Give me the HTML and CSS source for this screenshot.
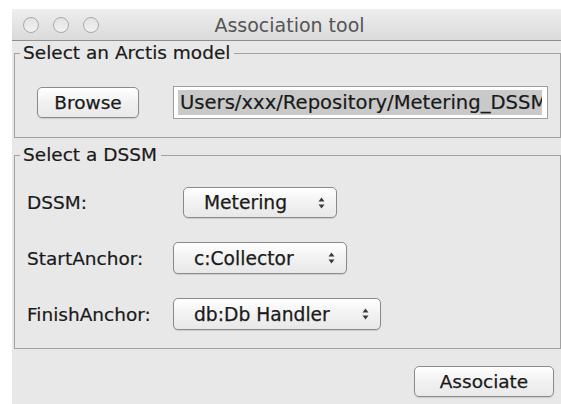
FILE: index.html
```html
<!DOCTYPE html>
<html lang="en">
<head>
<meta charset="utf-8">
<title>Association tool</title>
<link rel="stylesheet" href="styles.css">
</head>
<body>
<div class="window">
  <header class="titlebar">
    <div class="lights">
      <span class="light"></span>
      <span class="light"></span>
      <span class="light"></span>
    </div>
    <div class="title">Association tool</div>
    <div></div>
  </header>

  <main class="content">
    <fieldset class="group group-model">
      <legend>Select an Arctis model</legend>
      <div class="model-row">
        <button class="btn btn-browse" type="button">Browse</button>
        <div class="path-field"><div class="path-sel">Users/xxx/Repository/Metering_DSSM</div></div>
      </div>
    </fieldset>

    <fieldset class="group group-dssm">
      <legend>Select a DSSM</legend>
      <div class="form-grid">
        <span class="label">DSSM:</span>
        <div class="popup popup-dssm">
          <span>Metering</span>
          <svg class="arrows" width="7" height="12" viewBox="0 0 7 12"><path d="M3.5 0.5L6.5 4.6H0.5Z M3.5 11.5L6.5 7.4H0.5Z"/></svg>
        </div>

        <span class="label">StartAnchor:</span>
        <div class="popup popup-start">
          <span>c:Collector</span>
          <svg class="arrows" width="7" height="12" viewBox="0 0 7 12"><path d="M3.5 0.5L6.5 4.6H0.5Z M3.5 11.5L6.5 7.4H0.5Z"/></svg>
        </div>

        <span class="label">FinishAnchor:</span>
        <div class="popup popup-finish">
          <span>db:Db Handler</span>
          <svg class="arrows" width="7" height="12" viewBox="0 0 7 12"><path d="M3.5 0.5L6.5 4.6H0.5Z M3.5 11.5L6.5 7.4H0.5Z"/></svg>
        </div>
      </div>
    </fieldset>

    <div class="actions">
      <button class="btn btn-associate" type="button">Associate</button>
    </div>
  </main>
</div>
</body>
</html>
```

FILE: styles.css
```css
html, body {
  margin: 0;
  padding: 0;
  background: #ffffff;
}

body {
  padding: 9px 0 0 12px;
  font-family: "DejaVu Sans", "Liberation Sans", sans-serif;
  font-size: 18px;
  color: #1a1a1a;
  overflow: hidden;
}

.window {
  width: 549px;
  height: 395px;
  background: #e8e8e8;
  display: flex;
  flex-direction: column;
}

/* title bar with inactive traffic lights */
.titlebar {
  height: 31px;
  display: grid;
  grid-template-columns: 1fr auto 1fr;
  align-items: center;
  background: linear-gradient(#eeeeee, #dadada);
  border-bottom: 1px solid #8e8e8e;
  flex: none;
}

.lights {
  display: flex;
  gap: 14px;
  padding-left: 11px;
}

.light {
  width: 14px;
  height: 14px;
  border-radius: 50%;
  border: 1px solid #a9a9a9;
  background: linear-gradient(#e2e2e2, #f2f2f2);
}

.title {
  font-size: 19px;
  line-height: 22px;
  color: #555555;
  padding-left: 6px;
}

.content {
  flex: 1;
  display: flex;
  flex-direction: column;
}

/* titled borders */
.group {
  margin: 0 0 0 2px;
  padding: 0;
  border: 1px solid #a2a2a2;
  min-width: 0;
}

.group legend {
  margin-left: 5px;
  padding: 0 4px 0 3px;
  line-height: 20px;
  font-size: 18.5px;
  color: #1a1a1a;
  -webkit-text-stroke: 0.2px #1a1a1a;
}

.group-model {
  margin-top: 2px;
}

.model-row {
  display: flex;
  align-items: center;
  padding: 23px 0 18px 22px;
}

.btn {
  font-family: inherit;
  font-size: 18.5px;
  color: #1a1a1a;
  -webkit-text-stroke: 0.25px #1a1a1a;
  background: linear-gradient(#ffffff, #f1f1f1 50%, #e9e9e9);
  border: 1px solid #8b8b8b;
  border-radius: 5px;
  box-shadow: 0 1px 1px rgba(0, 0, 0, 0.12);
  padding: 0;
  line-height: 22px;
}

.btn-browse {
  width: 102px;
  height: 31px;
}

.path-field {
  margin-left: 34px;
  width: 375px;
  height: 33px;
  box-sizing: border-box;
  border: 1px solid #9d9d9d;
  background: #ffffff;
  padding: 3px 5px 3px 4px;
}

.path-sel {
  height: 25px;
  line-height: 25px;
  background: #c9c9c9;
  white-space: nowrap;
  overflow: hidden;
  padding-left: 2px;
  font-size: 19.6px;
  color: #1a1a1a;
  -webkit-text-stroke: 0.2px #1a1a1a;
}

.group-dssm {
  margin-top: 7px;
}

.form-grid {
  display: grid;
  grid-template-columns: 146px auto;
  row-gap: 24px;
  align-items: center;
  justify-items: start;
  padding: 22px 0 18px 12px;
}

.label {
  font-size: 18.5px;
  color: #1a1a1a;
  -webkit-text-stroke: 0.2px #1a1a1a;
}

/* pop-up buttons */
.popup {
  height: 32px;
  box-sizing: border-box;
  display: flex;
  align-items: center;
  justify-content: space-between;
  padding: 0 11px 0 20px;
  background: linear-gradient(#ffffff, #f2f2f2 50%, #e8e8e8);
  border: 1px solid #8b8b8b;
  border-radius: 5px;
  box-shadow: 0 1px 1px rgba(0, 0, 0, 0.12);
  font-size: 18.7px;
  -webkit-text-stroke: 0.25px #1a1a1a;
}

.popup .arrows path {
  fill: #3a3a3a;
}

.popup-dssm {
  margin-left: 10px;
  width: 154px;
  height: 31px;
}

.popup-start {
  width: 174px;
}

.popup-finish {
  width: 208px;
}

.actions {
  display: flex;
  justify-content: flex-end;
  padding: 17px 7px 0 0;
}

.btn-associate {
  width: 140px;
  height: 31px;
}
```
